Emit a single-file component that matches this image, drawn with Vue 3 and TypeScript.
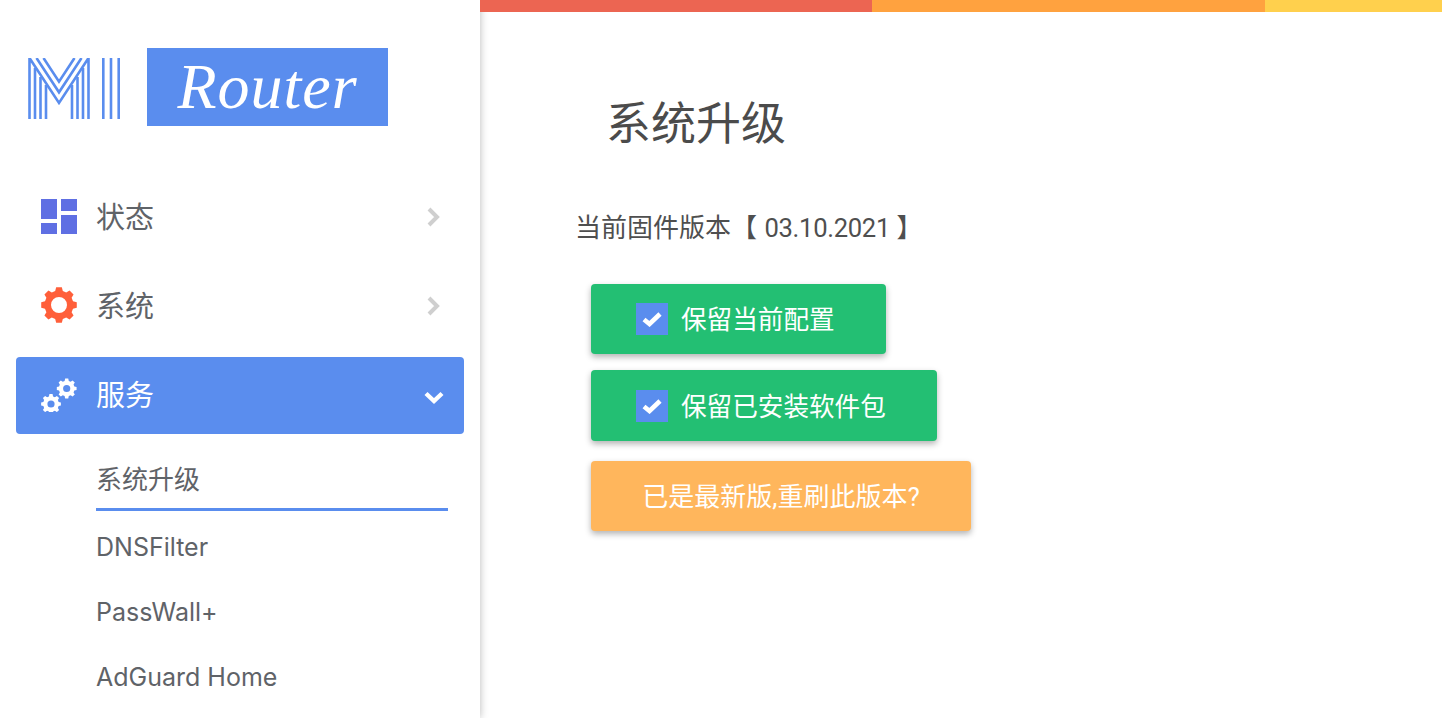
<script setup lang="ts">
// gear outline built from teeth, hole is cut with evenodd
const gear = (cx: number, cy: number, outer: number, root: number, hole: number, teeth: number) => {
  const pts: string[] = [];
  const step = (Math.PI * 2) / teeth;
  for (let i = 0; i < teeth; i++) {
    const a = i * step - Math.PI / 2;
    const corners: [number, number][] = [
      [root, a - step * 0.34],
      [outer, a - step * 0.2],
      [outer, a + step * 0.2],
      [root, a + step * 0.34]
    ];
    for (const [r, t] of corners) {
      pts.push(`${(cx + r * Math.cos(t)).toFixed(2)} ${(cy + r * Math.sin(t)).toFixed(2)}`);
    }
  }
  const ring = `M${cx - hole} ${cy}a${hole} ${hole} 0 1 0 ${hole * 2} 0a${hole} ${hole} 0 1 0 ${-hole * 2} 0Z`;
  return `M${pts.join("L")}Z${ring}`;
};

const cogPath = gear(18, 18, 18, 14.5, 8, 8);
const cogsPath = gear(10, 28, 10, 7.9, 3.6, 8) + gear(25.7, 12.5, 10, 7.9, 3.6, 8);

// striped logo mark
const mStripes = [
  "M1.5 61V0L31 45L60.5 0V61",
  "M8.5 0L31 34.3L53.5 0",
  "M15.5 0L31 23.6L46.5 0",
  "M7 61V10M12.5 61V19M18 61V27",
  "M55 61V10M49.5 61V19M44 61V27"
];
const iStripes = [75.3, 83, 90.7];

const subItems = ["DNSFilter", "PassWall+", "AdGuard Home"];
</script>

<template>
  <div class="page">
    <aside class="sidebar">
      <div class="brand">
        <svg class="mi" width="92" height="62" viewBox="0 0 92 62" fill="none" stroke="#5a8dee" stroke-width="2.6">
          <path v-for="d in mStripes" :key="d" :d="d" />
          <path v-for="x in iStripes" :key="x" :d="`M${x} 0V61`" />
        </svg>
        <div class="router"><span class="script">Router</span></div>
      </div>

      <nav class="menu">
        <a class="item">
          <svg class="ico" width="36" height="36" viewBox="0 0 36 36" fill="#5f6fe3">
            <rect x="0" y="1" width="16" height="20" />
            <rect x="0" y="25" width="16" height="11" />
            <rect x="20" y="1" width="16" height="12" />
            <rect x="20" y="17" width="16" height="19" />
          </svg>
          <span class="label">状态</span>
          <svg class="arrow" width="14" height="20" viewBox="0 0 14 20" fill="none" stroke="#cfcfcf" stroke-width="4">
            <path d="M2 2L10 10L2 18" />
          </svg>
        </a>
        <a class="item">
          <svg class="ico" width="36" height="36" viewBox="0 0 36 36" fill="#ff5f3a" fill-rule="evenodd">
            <path :d="cogPath" />
          </svg>
          <span class="label">系统</span>
          <svg class="arrow" width="14" height="20" viewBox="0 0 14 20" fill="none" stroke="#cfcfcf" stroke-width="4">
            <path d="M2 2L10 10L2 18" />
          </svg>
        </a>
        <a class="item active">
          <svg class="ico" width="36" height="36" viewBox="0 0 36 36" fill="#fff" fill-rule="evenodd">
            <path :d="cogsPath" />
          </svg>
          <span class="label">服务</span>
          <svg class="arrow down" width="20" height="14" viewBox="0 0 20 14" fill="none" stroke="#fff" stroke-width="4.4">
            <path d="M2 2.5L10 10L18 2.5" />
          </svg>
        </a>

        <ul class="sub">
          <li class="current">系统升级</li>
          <li v-for="s in subItems" :key="s">{{ s }}</li>
        </ul>
      </nav>
    </aside>

    <main class="main">
      <div class="stripe">
        <i class="red"></i>
        <i class="orange"></i>
        <i class="yellow"></i>
      </div>
      <div class="content">
        <h2>系统升级</h2>
        <p class="version">当前固件版本【 <span class="num">03.10.2021</span> 】</p>
        <div class="actions">
          <button class="btn green">
            <span class="check">
              <svg width="20" height="16" viewBox="0 0 20 16" fill="none" stroke="#fff" stroke-width="4.6">
                <path d="M2 8.5L7.5 13L18 3" />
              </svg>
            </span>
            <span class="txt">保留当前配置</span>
          </button>
          <button class="btn green">
            <span class="check">
              <svg width="20" height="16" viewBox="0 0 20 16" fill="none" stroke="#fff" stroke-width="4.6">
                <path d="M2 8.5L7.5 13L18 3" />
              </svg>
            </span>
            <span class="txt">保留已安装软件包</span>
          </button>
          <button class="btn orange-btn"><span class="txt">已是最新版,重刷此版本?</span></button>
        </div>
      </div>
    </main>
  </div>
</template>

<style scoped>
.page {
  display: flex;
  width: 1442px;
  height: 718px;
  overflow: hidden;
  background: #fff;
  font-family: Roboto, "Noto Sans CJK SC", sans-serif;
  color: #5f6368;
}

.sidebar {
  flex: 0 0 480px;
  box-shadow: 0 0 8px rgba(0, 0, 0, 0.28);
  padding: 48px 16px 0;
  box-sizing: border-box;
}

.brand {
  display: flex;
  align-items: center;
  gap: 27px;
  padding-left: 12px;
  height: 78px;
}

.mi {
  margin-top: 3px;
}

.router {
  width: 241px;
  height: 78px;
  background: #5a8dee;
  display: flex;
  align-items: center;
  justify-content: center;
}

.script {
  font-family: "Liberation Serif", serif;
  font-style: italic;
  font-size: 64px;
  line-height: 1;
  color: #fff;
  letter-spacing: 1px;
}

.menu {
  margin-top: 53px;
  display: flex;
  flex-direction: column;
  gap: 12px;
}

.item {
  display: flex;
  align-items: center;
  height: 77px;
  padding: 0 23px 4px 25px;
  box-sizing: border-box;
  border-radius: 4px;
  font-size: 29px;
}

.item.active {
  background: #5a8dee;
  color: #fff;
}

.ico {
  flex: none;
}

.label {
  flex: 1;
  margin: 0 0 2px 19px;
}

.arrow {
  margin-top: 3px;
}

.arrow.down {
  margin-right: -3px;
  margin-top: 9px;
}

.sub {
  list-style: none;
  margin: 4px 0 0;
  padding: 0 0 0 80px;
  font-size: 25px;
  font-family: Inter, "Noto Sans CJK SC", sans-serif;
}

.sub li {
  height: 65px;
  line-height: 72px;
  margin-right: 16px;
}

.sub li.current {
  height: 61px;
  line-height: 60px;
  font-size: 26px;
  border-bottom: 3px solid #5a8dee;
  box-sizing: border-box;
}

.main {
  flex: 1;
  min-width: 0;
  position: relative;
}

.stripe {
  display: flex;
  height: 12px;
}

.stripe i {
  display: block;
}

.red {
  width: 392px;
  background: #ec6552;
}

.orange {
  width: 393px;
  background: #ffa23f;
}

.yellow {
  flex: 1;
  background: #ffd04d;
}

.content {
  padding: 0 0 0 95px;
}

h2 {
  margin: 83px 0 0 31px;
  font-size: 45px;
  font-weight: 400;
  line-height: 60px;
  color: #4b4b4b;
}

.version {
  margin: 53px 0 0;
  font-size: 26px;
  line-height: 40px;
  color: #4f4f4f;
}

.num {
  font-size: 25.6px;
  letter-spacing: -0.3px;
  margin-left: 1px;
}

.actions {
  margin: 36px 0 0 16px;
  display: flex;
  flex-direction: column;
  align-items: flex-start;
}

.btn {
  display: flex;
  align-items: center;
  border: 0;
  border-radius: 4px;
  height: 70px;
  color: #fff;
  font: inherit;
  font-size: 25.6px;
  box-shadow: 0 3px 6px rgba(0, 0, 0, 0.3);
}

.txt {
  margin-bottom: 4px;
}

.green {
  background: #23bf73;
  padding: 0 51.4px 0 45px;
  margin-bottom: 16px;
}

.green:nth-child(2) {
  height: 71px;
  margin-bottom: 20px;
}

.green:nth-child(2) .txt {
  margin-bottom: 2px;
}

.orange-btn {
  background: #ffb65c;
  justify-content: center;
  width: 380px;
  font-size: 26px;
}

.check {
  width: 32px;
  height: 32px;
  margin-right: 13px;
  background: #5a8dee;
  display: flex;
  align-items: center;
  justify-content: center;
}
</style>

<style>
body {
  margin: 0;
}
</style>
